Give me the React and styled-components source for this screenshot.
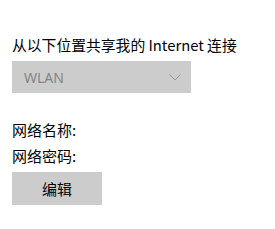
import React from 'react'
import styled, { createGlobalStyle } from 'styled-components'

const GlobalStyle = createGlobalStyle`
  html, body {
    margin: 0;
    padding: 0;
    background: #ffffff;
  }
  body {
    font-family: "Noto Sans CJK SC", "Noto Sans", sans-serif;
    color: #000000;
  }
`

const Page = styled.div`
  width: 275px;
  height: 229px;
  padding: 34px 12px 0;
  box-sizing: border-box;
  display: flex;
  flex-direction: column;
`

const Title = styled.div`
  font-size: 14.8px;
  line-height: 21px;
  white-space: nowrap;
`

const Select = styled.div`
  margin-top: 6px;
  width: 179px;
  height: 32px;
  background: #cccccc;
  display: flex;
  align-items: center;
  justify-content: space-between;
  padding: 0 10px 0 12px;
  box-sizing: border-box;
  color: #858585;
  font-family: "Noto Sans", "Liberation Sans", sans-serif;
  font-size: 14px;
`

const Label = styled.div`
  margin-top: ${p => p.gap}px;
  font-size: 15px;
  line-height: 20px;
`

const Button = styled.button`
  margin-top: 6px;
  width: 90px;
  height: 33px;
  border: none;
  background: #cccccc;
  color: #000000;
  font-family: "Noto Sans CJK SC", sans-serif;
  font-size: 15px;
  padding: 0;
`

const Chevron = () => (
  <svg width="12" height="7" viewBox="0 0 12 7">
    <path d="M0.5 0.5 L6 6 L11.5 0.5" fill="none" stroke="#999999" strokeWidth="1" />
  </svg>
)

export default function App() {
  return (
    <>
      <GlobalStyle />
      <Page>
        <Title>从以下位置共享我的 Internet 连接</Title>
        <Select>
          <span>WLAN</span>
          <Chevron />
        </Select>
        <Label gap={27}>网络名称:</Label>
        <Label gap={6}>网络密码:</Label>
        <div>
          <Button>编辑</Button>
        </div>
      </Page>
    </>
  )
}
